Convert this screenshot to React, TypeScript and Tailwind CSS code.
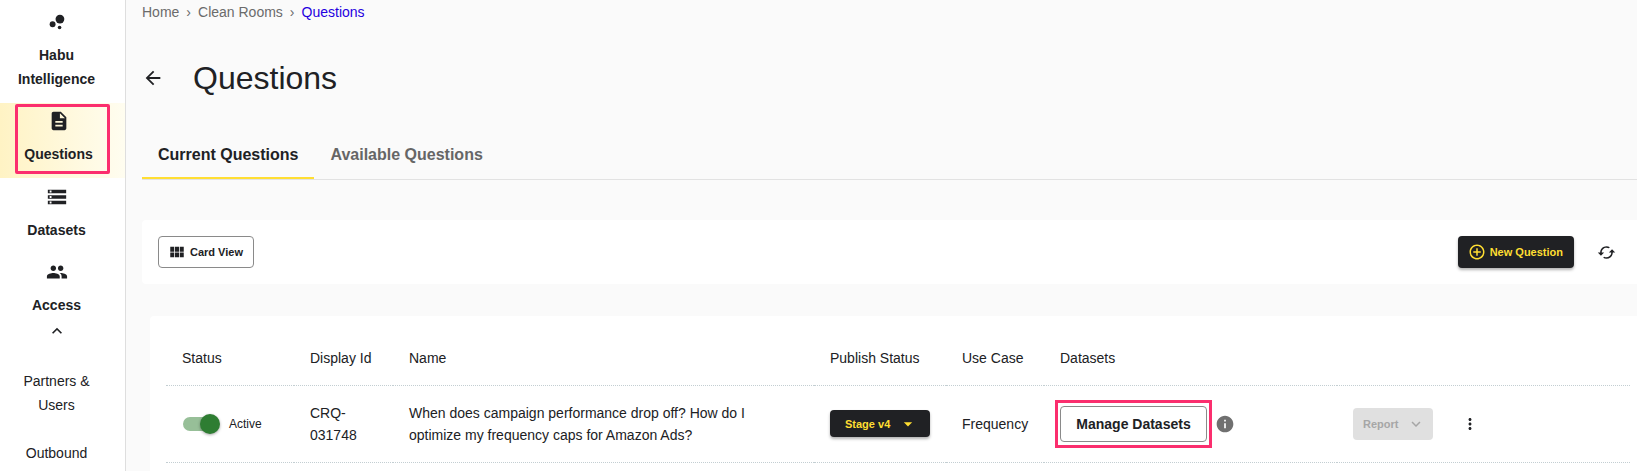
import { useState } from "react";
import type { ReactNode } from "react";
import type { IconType } from "react-icons";
import {
  MdAddCircleOutline,
  MdArrowBack,
  MdArrowDropDown,
  MdBubbleChart,
  MdCached,
  MdDescription,
  MdExpandLess,
  MdExpandMore,
  MdInfo,
  MdMoreVert,
  MdPeople,
  MdStorage,
  MdViewModule,
} from "react-icons/md";

// ─── Sidebar ──────────────────────────────────────────────────────────────────

function NavItem({
  icon: Icon,
  label,
  active = false,
}: {
  icon: IconType;
  label: string;
  active?: boolean;
}) {
  return (
    <a
      href="#"
      aria-current={active ? "page" : undefined}
      className={`relative flex flex-col items-center pt-1.5 pb-3 text-center text-sm leading-6 font-bold ${
        active
          ? "mb-px bg-linear-to-r from-[#fff3c4] to-[#fffdf0] pr-2"
          : "pr-3"
      }`}
    >
      <span className="flex h-6 items-center">
        <Icon size={22} aria-hidden="true" />
      </span>
      <span className="mt-[9px] px-3">{label}</span>
      {active && (
        <span className="absolute top-px bottom-1 left-[15px] w-[95px] rounded-xs border-[3px] border-[#fb2e6e]" />
      )}
    </a>
  );
}

function Sidebar() {
  return (
    <nav
      aria-label="Main"
      className="w-[126px] shrink-0 border-r border-[#dedede] bg-white pt-1"
    >
      <NavItem icon={MdBubbleChart} label="Habu Intelligence" />
      <NavItem icon={MdDescription} label="Questions" active />
      <NavItem icon={MdStorage} label="Datasets" />
      <NavItem icon={MdPeople} label="Access" />
      <div className="pr-3 text-center text-sm leading-6">
        <button aria-label="Collapse access" className="-mt-2 block w-full">
          <MdExpandLess size={20} className="mx-auto" aria-hidden="true" />
        </button>
        <a href="#" className="mt-7 block px-5">
          Partners &amp; Users
        </a>
        <a href="#" className="mt-6 block">
          Outbound
        </a>
      </div>
    </nav>
  );
}

// ─── Header ───────────────────────────────────────────────────────────────────

function Breadcrumbs() {
  return (
    <nav aria-label="Breadcrumb" className="text-sm leading-6 text-[#6b6b6b]">
      <ol className="flex">
        <li>
          <a href="#">Home</a>
          <span className="mx-[7px]">›</span>
        </li>
        <li>
          <a href="#">Clean Rooms</a>
          <span className="mx-[7px]">›</span>
        </li>
        <li>
          <a href="#" aria-current="page" className="text-[#2400e0]">
            Questions
          </a>
        </li>
      </ol>
    </nav>
  );
}

function Tabs() {
  const [tab, setTab] = useState("Current Questions");
  return (
    <div role="tablist" className="flex border-b border-[#e2e2e2]">
      {["Current Questions", "Available Questions"].map((name) => (
        <button
          key={name}
          role="tab"
          aria-selected={tab === name}
          onClick={() => setTab(name)}
          className={`h-[47px] border-b-2 px-4 text-base font-bold ${
            tab === name
              ? "border-[#ffde32] text-[#202124]"
              : "border-transparent text-[#666]"
          }`}
        >
          {name}
        </button>
      ))}
    </div>
  );
}

function Toolbar() {
  return (
    <div className="mt-10 flex items-center rounded-l bg-white p-4 text-[11px] font-bold">
      <button className="flex h-8 items-center rounded border border-[#8a8a8a] pr-2.5 pl-[9px]">
        <MdViewModule size={18} className="mr-1" aria-hidden="true" />
        Card View
      </button>
      <button className="ml-auto flex h-8 items-center rounded bg-[#202124] pr-[11px] pl-2.5 text-[#ffde32] shadow-[0_2px_3px_rgba(0,0,0,0.3)]">
        <MdAddCircleOutline size={18} className="mr-1" aria-hidden="true" />
        New Question
      </button>
      <button aria-label="Refresh" className="ml-[18px] px-[5px]">
        <MdCached size={19} aria-hidden="true" />
      </button>
    </div>
  );
}

// ─── Table ────────────────────────────────────────────────────────────────────

const columns = [
  { label: "Status", width: "w-[128px]" },
  { label: "Display Id", width: "w-[99px]" },
  { label: "Name", width: "w-[421px]" },
  { label: "Publish Status", width: "w-[132px]" },
  { label: "Use Case", width: "w-[98px]" },
  { label: "Datasets", width: "w-[293px]" },
  { label: "", width: "" },
];

function Cell({ children }: { children: ReactNode }) {
  return (
    <td className="h-[77px] border-b border-dotted border-[#c3ced2] px-4">
      {children}
    </td>
  );
}

function StatusSwitch() {
  const [on, setOn] = useState(true);
  return (
    <label className="flex items-center text-xs">
      <input
        type="checkbox"
        role="switch"
        checked={on}
        onChange={() => setOn(!on)}
        className="relative mr-3 ml-px h-3.5 w-[34px] shrink-0 appearance-none rounded-full bg-[#bdbdbd] before:absolute before:-top-[3px] before:-left-[3px] before:size-5 before:rounded-full before:bg-white before:shadow-[0_1px_3px_rgba(0,0,0,0.35)] checked:bg-[#97bf98] checked:before:left-[17px] checked:before:bg-[#2e7d32]"
      />
      {on ? "Active" : "Inactive"}
    </label>
  );
}

function QuestionsTable() {
  return (
    <div className="mt-8 ml-2 rounded-l bg-white pt-[15px] pr-[7px] pb-4 pl-4">
      <table className="w-full table-fixed text-left text-sm leading-[22px]">
        <thead>
          <tr>
            {columns.map((col) => (
              <th
                key={col.label}
                className={`h-[54px] border-b border-dotted border-[#c3ced2] px-4 font-normal ${col.width}`}
              >
                {col.label}
              </th>
            ))}
          </tr>
        </thead>
        <tbody>
          <tr>
            <Cell>
              <StatusSwitch />
            </Cell>
            <Cell>CRQ-031748</Cell>
            <Cell>
              <p className="max-w-[350px]">
                When does campaign performance drop off? How do I optimize my
                frequency caps for Amazon Ads?
              </p>
            </Cell>
            <Cell>
              <button className="flex h-[27px] w-[100px] items-center rounded bg-[#202124] pl-[15px] text-[11px] font-bold text-[#ffde32] shadow-[0_2px_3px_rgba(0,0,0,0.3)]">
                Stage v4
                <MdArrowDropDown size={20} className="ml-2" aria-hidden="true" />
              </button>
            </Cell>
            <Cell>Frequency</Cell>
            <Cell>
              <div className="flex items-center">
                <div className="relative">
                  <button className="h-9 w-[147px] rounded border border-[#8a8a8a] font-bold">
                    Manage Datasets
                  </button>
                  <span className="pointer-events-none absolute -inset-x-[5px] -inset-y-1.5 border-[3px] border-[#fb2e6e]" />
                </div>
                <MdInfo size={20} className="ml-2 text-[#707070]" aria-hidden="true" />
              </div>
            </Cell>
            <Cell>
              <div className="flex items-center">
                <button
                  disabled
                  className="flex h-8 w-20 items-center rounded bg-[#e0e0e0] pl-2.5 text-[11px] font-bold text-[#a6a6a6]"
                >
                  Report
                  <MdExpandMore size={18} className="ml-[9px]" aria-hidden="true" />
                </button>
                <button aria-label="More actions" className="ml-7">
                  <MdMoreVert size={18} aria-hidden="true" />
                </button>
              </div>
            </Cell>
          </tr>
        </tbody>
      </table>
    </div>
  );
}

// ─── Page ─────────────────────────────────────────────────────────────────────

export default function App() {
  return (
    <div className="flex h-screen overflow-hidden bg-[#fafafa] font-['Liberation_Sans',Arial,sans-serif] text-[#202124]">
      <Sidebar />
      <main className="min-w-0 flex-1 pl-4">
        <Breadcrumbs />
        <div className="mt-8 mb-8 flex items-center">
          <button aria-label="Back" className="mr-[29px]">
            <MdArrowBack size={22} aria-hidden="true" />
          </button>
          <h1 className="text-[32px] leading-[44px]">Questions</h1>
        </div>
        <Tabs />
        <Toolbar />
        <QuestionsTable />
      </main>
    </div>
  );
}
